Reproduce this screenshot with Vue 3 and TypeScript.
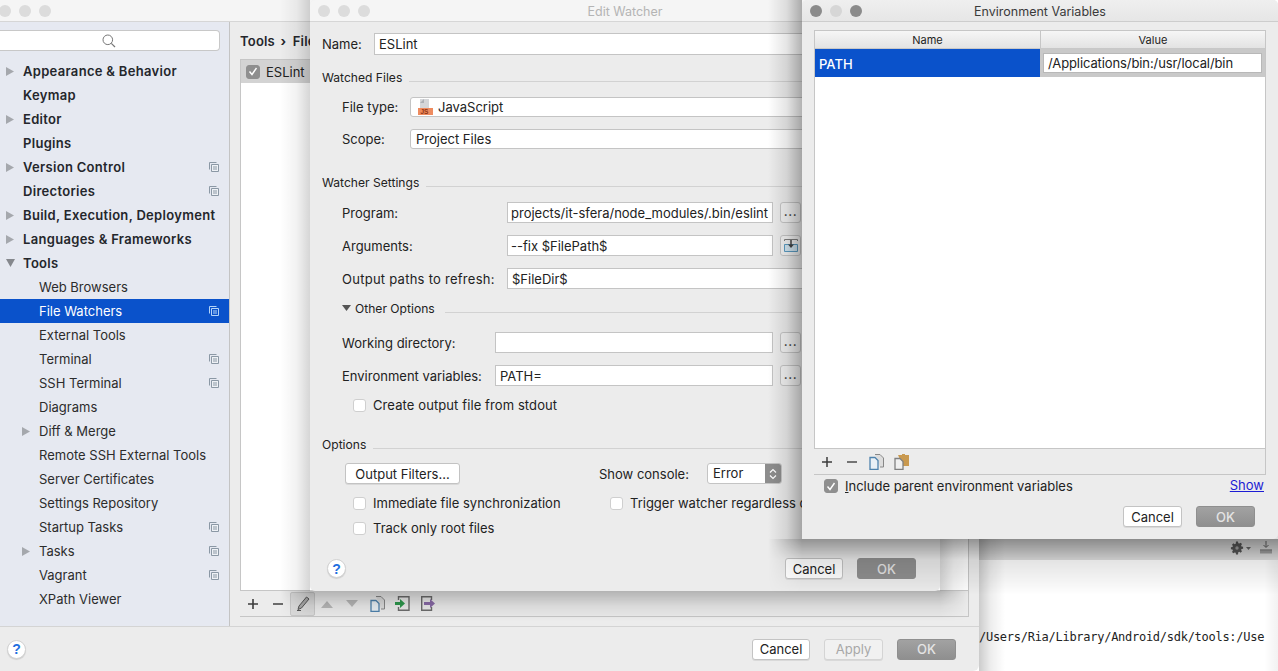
<script setup lang="ts">
interface NavItem { label: string; level: number; arrow?: 'right' | 'down'; stack?: boolean; selected?: boolean }
const nav: NavItem[] = [
  { label: 'Appearance & Behavior', level: 0, arrow: 'right' },
  { label: 'Keymap', level: 0 },
  { label: 'Editor', level: 0, arrow: 'right' },
  { label: 'Plugins', level: 0 },
  { label: 'Version Control', level: 0, arrow: 'right', stack: true },
  { label: 'Directories', level: 0, stack: true },
  { label: 'Build, Execution, Deployment', level: 0, arrow: 'right' },
  { label: 'Languages & Frameworks', level: 0, arrow: 'right' },
  { label: 'Tools', level: 0, arrow: 'down' },
  { label: 'Web Browsers', level: 1 },
  { label: 'File Watchers', level: 1, stack: true, selected: true },
  { label: 'External Tools', level: 1 },
  { label: 'Terminal', level: 1, stack: true },
  { label: 'SSH Terminal', level: 1, stack: true },
  { label: 'Diagrams', level: 1 },
  { label: 'Diff & Merge', level: 1, arrow: 'right' },
  { label: 'Remote SSH External Tools', level: 1 },
  { label: 'Server Certificates', level: 1 },
  { label: 'Settings Repository', level: 1 },
  { label: 'Startup Tasks', level: 1, stack: true },
  { label: 'Tasks', level: 1, arrow: 'right', stack: true },
  { label: 'Vagrant', level: 1, stack: true },
  { label: 'XPath Viewer', level: 1 },
]
</script>

<template>
  <div class="desk">
    <!-- IDE behind everything -->
    <div class="ide-band">
      <svg class="gear" width="14" height="14" viewBox="0 0 14 14"><path d="M6 .6h2l.3 1.600 1 .4 1.300-.9 1.400 1.400-.9 1.300.4 1 1.600.3v2l-1.600.3-.4 1 .9 1.300-1.400 1.400-1.300-.9-1 .4L8 13.400H6l-.3-1.600-1-.4-1.300.9L2 10.900l.9-1.300-.4-1L.9 8.300v-2l1.600-.3.4-1L2 3.700l1.400-1.400 1.300.9 1-.4z" fill="#5a5a5a"/><circle cx="7" cy="7" r="1.700" fill="#a8a8a8"/></svg>
      <svg class="caret" width="5" height="3" viewBox="0 0 5 3"><path d="M0 0h5L2.500 3z" fill="#6d6d6d"/></svg>
      <svg class="pin" width="12" height="14" viewBox="0 0 12 14"><path d="M6 0v6M3.500 4L6 6.500 8.500 4" fill="none" stroke="#666"/><path d="M0 9.500h12v3H0z" fill="#a3a3a3"/><path d="M0 9h12" stroke="#666"/></svg>
    </div>
    <div class="ide-edge"></div>
    <div class="ide-console">/Users/Ria/Library/Android/sdk/tools:/Use</div>

    <!-- Settings window -->
    <div class="shade s-settings-r"></div>
    <section class="win settings">
      <header class="title inactive">
        <i class="light l-off"></i><i class="light l-off"></i><i class="light l-off"></i>
      </header>
      <div class="settings-main">
        <aside class="side">
          <div class="search">
            <svg width="14" height="14" viewBox="0 0 14 14"><circle cx="5.800" cy="5.800" r="4.800" fill="none" stroke="#777"/><path d="M9.300 9.300L13 13" stroke="#777" stroke-width="1.200"/></svg>
          </div>
          <ul class="tree">
            <li v-for="n in nav" :key="n.label" class="node" :class="{ sel: n.selected, top: n.level === 0, sub: n.level === 1 }">
              <svg v-if="n.arrow === 'right'" class="arr" width="8" height="9" viewBox="0 0 8 9"><path d="M0 0l8 4.500L0 9z" fill="#a5a8ad"/></svg>
              <svg v-if="n.arrow === 'down'" class="arr" width="9" height="8" viewBox="0 0 9 8"><path d="M0 0h9L4.500 8z" fill="#85888d"/></svg>
              <span class="lbl">{{ n.label }}</span>
              <svg v-if="n.stack" class="stk" width="10" height="10" viewBox="0 0 10 10"><path d="M.5 7.500V.5h7" fill="none" :stroke="n.selected ? '#b4d4f8' : '#8b98a5'"/><path d="M2.500 2.500h7v7h-7z" :fill="n.selected ? 'none' : '#eef1f5'" :stroke="n.selected ? '#b4d4f8' : '#8b98a5'"/><path d="M4 5h4M4 7h4" :stroke="n.selected ? '#b4d4f8' : '#8b98a5'"/></svg>
            </li>
          </ul>
        </aside>
        <div class="pane">
          <div class="crumb">Tools <b class="chev">›</b> File Watchers</div>
          <div class="tbl">
            <div class="tbl-body">
              <div class="eslint-row">
                <span class="check on small"><svg width="10" height="9" viewBox="0 0 10 9"><path d="M1.500 4.500L4 7.500 8.500 1" fill="none" stroke="#fff" stroke-width="1.400"/></svg></span>
                <span>ESLint</span>
              </div>
            </div>
            <div class="tbl-tools">
              <span class="tool"><svg width="12" height="12" viewBox="0 0 12 12"><path d="M6 1v10M1 6h10" stroke="#3c3c3c" stroke-width="1.600"/></svg></span>
              <span class="tool"><svg width="12" height="12" viewBox="0 0 12 12"><path d="M1 6h10" stroke="#4c4c4c" stroke-width="1.600"/></svg></span>
              <span class="tool act"><svg width="14" height="15" viewBox="0 0 14 15"><path d="M10.500 1L13 3 5.500 12 2 13.500 3 10z" fill="#a8a8a8" stroke="#555"/><path d="M1 14.500h4" stroke="#555"/></svg></span>
              <span class="tool nudge"><svg width="12" height="8" viewBox="0 0 12 8"><path d="M0 8L6 1l6 7z" fill="#b8b8b8"/></svg></span>
              <span class="tool nudge"><svg width="12" height="8" viewBox="0 0 12 8"><path d="M0 0l6 7 6-7z" fill="#b8b8b8"/></svg></span>
              <span class="tool"><svg width="15" height="16" viewBox="0 0 15 16"><path d="M6 .500h5l3.500 3.500v9H11" fill="#ddd" stroke="#888"/><path d="M1 4.500h5l3 3v8H1z" fill="#e9f0f6" stroke="#4e82ad" stroke-width="1.300"/></svg></span>
              <span class="tool"><svg width="15" height="15" viewBox="0 0 15 15"><path d="M3.500 4V.700h10.500v13.600H3.500V11" fill="none" stroke="#6d6d6d" stroke-width="1.400"/><path d="M0 6h5V3l5 4.500L5 12V9H0z" fill="#2e9a4e"/></svg></span>
              <span class="tool"><svg width="15" height="15" viewBox="0 0 15 15"><path d="M11.500 4V.700H1.700v13.600h9.800V11" fill="none" stroke="#6d6d6d" stroke-width="1.400"/><path d="M4 6h6V3l5 4.500L10 12V9H4z" fill="#8a6ba8"/></svg></span>
            </div>
          </div>
        </div>
      </div>
      <footer class="settings-foot">
        <span class="help"><i>?</i></span>
        <span class="spring"></span>
        <button class="btn plain w58">Cancel</button>
        <button class="btn plain w59 dis">Apply</button>
        <button class="btn ok w59">OK</button>
      </footer>
    </section>

    <!-- Edit Watcher -->
    <div class="shade s-watcher-l"></div>
    <div class="shade s-watcher-r"></div>
    <div class="shade s-watcher-b"></div>
    <section class="win watcher">
      <header class="title inactive">
        <i class="light l-off"></i><i class="light l-off"></i><i class="light l-off"></i>
        <span class="cap dim">Edit Watcher</span>
      </header>
      <div class="w-body">
        <div class="row name-row"><label class="name-l">Name:</label><div class="field grow">ESLint</div></div>
        <div class="group g-watched"><span>Watched Files</span><hr /></div>
        <div class="row ft"><label class="l68">File type:</label>
          <div class="field grow round js">
            <svg width="15" height="16" viewBox="0 0 15 16"><path d="M2 0h9v9H2z" fill="#d5d7da"/><path d="M2 4l4-4v4z" fill="#aeb2b7"/><path d="M0 9h15v7H0z" fill="#ee8b5f"/><text x="2.500" y="15" font-size="6.500" font-weight="700" font-family="Liberation Sans" fill="#8f3512">JS</text></svg>
            <span>JavaScript</span>
          </div>
        </div>
        <div class="row sc"><label class="l68">Scope:</label><div class="field grow round">Project Files</div></div>
        <div class="group g-settings"><span>Watcher Settings</span><hr /></div>
        <div class="row pr"><label class="l165">Program:</label><div class="field f265">projects/it-sfera/node_modules/.bin/eslint</div><button class="dots">...</button></div>
        <div class="row pr"><label class="l165">Arguments:</label><div class="field f265">--fix $FilePath$</div>
          <button class="dots ins"><svg width="16" height="15" viewBox="0 0 16 15"><path d="M1.500 6.500h13v7h-13z" fill="#d3e7f2" stroke="#5b9cc2"/><path d="M1.500 3V1.500h13V3" fill="none" stroke="#808080"/><path d="M8 2v5" stroke="#444" stroke-width="1.500"/><path d="M5 6.500h6L8 10z" fill="#444"/></svg></button></div>
        <div class="row pr"><label class="l165 spaced">Output paths to refresh:</label><div class="field grow">$FileDir$</div></div>
        <div class="other"><svg width="9" height="6" viewBox="0 0 9 6"><path d="M0 0h9L4.500 6z" fill="#555"/></svg><span>Other Options</span><hr /></div>
        <div class="row wd"><label class="l153">Working directory:</label><div class="field f277"></div><button class="dots">...</button></div>
        <div class="row ev"><label class="l153">Environment variables:</label><div class="field f277">PATH=</div><button class="dots">...</button></div>
        <div class="row chk stdout"><span class="check"></span><span class="wide">Create output file from stdout</span></div>
        <div class="group g-options"><span>Options</span><hr /></div>
        <div class="row filt">
          <button class="btn plain filters">Output Filters...</button>
          <span class="console-l">Show console:</span>
          <div class="stepper"><span>Error</span><b><svg width="8" height="12" viewBox="0 0 8 12"><path d="M1 4.500L4 1.500l3 3M1 7.500l3 3 3-3" fill="none" stroke="#fff" stroke-width="1.200"/></svg></b></div>
        </div>
        <div class="row chk imm"><span class="check"></span><span class="imm-t">Immediate file synchronization</span><span class="check"></span><span>Trigger watcher regardless of syntax errors</span></div>
        <div class="row chk trk"><span class="check"></span><span>Track only root files</span></div>
        <div class="row foot">
          <span class="help"><i>?</i></span>
          <span class="spring"></span>
          <button class="btn plain w58">Cancel</button>
          <button class="btn ok w59 grey">OK</button>
        </div>
      </div>
    </section>

    <!-- Environment Variables -->
    <div class="shade s-env-l"></div>
    <div class="shade s-env-b"></div>
    <section class="win env">
      <header class="title">
        <i class="light l-dark"></i><i class="light l-faint"></i><i class="light l-dark"></i>
        <span class="cap">Environment Variables</span>
      </header>
      <div class="e-body">
        <div class="etable">
          <div class="ehead"><span class="c1">Name</span><span class="c2">Value</span></div>
          <div class="erow">
            <span class="c1 esel">PATH</span>
            <span class="c2 eedit"><span class="einput">/Applications/bin:/usr/local/bin</span></span>
          </div>
          <div class="espace"></div>
          <div class="etools">
            <span class="etool"><svg width="12" height="12" viewBox="0 0 12 12"><path d="M6 1v10M1 6h10" stroke="#3c3c3c" stroke-width="1.500"/></svg></span>
            <span class="etool"><svg width="12" height="12" viewBox="0 0 12 12"><path d="M1 6h10" stroke="#4c4c4c" stroke-width="1.500"/></svg></span>
            <span class="etool"><svg width="15" height="16" viewBox="0 0 15 16"><path d="M6 .500h5l3.500 3.500v9H11" fill="#ddd" stroke="#888"/><path d="M1 3.500h5l3 3v9H1z" fill="#e9f0f6" stroke="#4e82ad" stroke-width="1.300"/></svg></span>
            <span class="etool"><svg width="15" height="16" viewBox="0 0 15 16"><path d="M4 1h4V0h3v1h4v11H9z" fill="#c9994f"/><path d="M1 4.500h5l3 3v8H1z" fill="#f0f0f0" stroke="#808080" stroke-width="1.300"/></svg></span>
          </div>
        </div>
        <div class="incl">
          <span class="check on"><svg width="10" height="9" viewBox="0 0 10 9"><path d="M1.500 4.500L4 7.500 8.500 1" fill="none" stroke="#fff" stroke-width="1.400"/></svg></span>
          <span class="incl-t"><u>I</u>nclude parent environment variables</span>
          <a class="show">Show</a>
        </div>
        <div class="e-btns">
          <button class="btn plain w59">Cancel</button>
          <button class="btn ok w59">OK</button>
        </div>
      </div>
    </section>
  </div>
</template>

<style>
html, body { margin: 0; background: #fff; overflow: hidden; }
</style>

<style scoped>
.desk { position: relative; width: 1278px; height: 671px; overflow: hidden; background: #fff; font-family: Inter, "Liberation Sans", sans-serif; font-size: 13px; color: #222; }
.ide-band { position: absolute; left: 900px; top: 530px; width: 378px; height: 30px; background: #e0e0e0; }
.gear { position: absolute; left: 330px; top: 11px; }
.caret { position: absolute; left: 346px; top: 17px; }
.pin { position: absolute; left: 360px; top: 11px; }
.ide-edge { position: absolute; right: 0; top: 560px; width: 14px; height: 111px; background: linear-gradient(90deg, rgba(0, 0, 0, 0), rgba(0, 0, 0, .05)); }
.ide-console { position: absolute; left: 979px; top: 629px; font: 12px/16px "DejaVu Sans Mono", monospace; letter-spacing: -.27px; color: #222; white-space: nowrap; }

.shade { position: absolute; pointer-events: none; }
.s-settings-r { left: 979px; top: 0; width: 26px; height: 671px; background: linear-gradient(90deg, rgba(0, 0, 0, .2), rgba(0, 0, 0, .07) 45%, rgba(0, 0, 0, 0)); }
.s-watcher-l { left: 280px; top: 0; width: 30px; height: 591px; background: linear-gradient(90deg, rgba(0, 0, 0, 0), rgba(0, 0, 0, .05) 55%, rgba(0, 0, 0, .16)); }
.s-watcher-r { left: 940px; top: 0; width: 30px; height: 591px; background: linear-gradient(90deg, rgba(0, 0, 0, .16), rgba(0, 0, 0, .05) 45%, rgba(0, 0, 0, 0)); }
.s-watcher-b { left: 280px; top: 591px; width: 690px; height: 30px; background: linear-gradient(rgba(0, 0, 0, .24), rgba(0, 0, 0, .08) 50%, rgba(0, 0, 0, 0)); -webkit-mask-image: linear-gradient(90deg, transparent, #000 30px, #000 660px, transparent); mask-image: linear-gradient(90deg, transparent, #000 30px, #000 660px, transparent); }
.s-env-l { left: 768px; top: 0; width: 34px; height: 539px; background: linear-gradient(90deg, rgba(0, 0, 0, 0), rgba(0, 0, 0, .1) 55%, rgba(0, 0, 0, .3)); }
.s-env-b { left: 768px; top: 539px; width: 510px; height: 56px; background: linear-gradient(rgba(0, 0, 0, .38), rgba(0, 0, 0, .11) 37%, rgba(0, 0, 0, 0)); -webkit-mask-image: linear-gradient(90deg, transparent, #000 34px); mask-image: linear-gradient(90deg, transparent, #000 34px); }

.win { position: absolute; background: #ececec; display: flex; flex-direction: column; overflow: hidden; }
.settings { left: 0; top: 0; width: 979px; height: 671px; border-radius: 0 0 6px 0; }
.watcher { left: 310px; top: 0; width: 630px; height: 591px; border-radius: 5px; }
.env { left: 802px; top: 0; width: 476px; height: 539px; border-radius: 5px; }

.title { height: 22px; box-sizing: border-box; flex: none; display: flex; align-items: center; padding-left: 8px; gap: 8px; background: linear-gradient(#efefef, #e6e6e6); border-bottom: 1px solid #cdcdcd; position: relative; }
.title.inactive { background: #f5f5f5; border-bottom-color: #d6d6d6; }
.settings .title { padding-left: 0; }
.settings .title .light:first-child { margin-left: -1px; }
.light { width: 12px; height: 12px; border-radius: 50%; display: block; }
.l-off { background: #dcdcdc; }
.l-dark { background: #8b8b8b; }
.l-faint { background: #d6d6d6; }
.cap { position: absolute; left: 0; right: 0; top: 4px; text-align: center; font-size: 12.500px; line-height: 16px; color: #3a3a3a; }
.cap.dim { color: #b4b4b4; }

.settings-main { flex: 1; display: flex; min-height: 0; }
.side { width: 230px; flex: none; background: #e6e9f1; border-right: 1px solid #c4c4c4; box-sizing: border-box; }
.search { margin: 8px 0 0; width: 220px; height: 21px; background: #fff; border: 1px solid #c8c8c8; border-left: 0; border-radius: 0 4px 4px 0; box-sizing: border-box; display: flex; align-items: center; justify-content: center; padding-right: 1px; }
.tree { list-style: none; margin: 8px 0 0; padding: 0; }
.node { height: 24px; display: flex; align-items: center; position: relative; line-height: 24px; white-space: nowrap; }
.top { padding-left: 23px; font-weight: 600; color: #24262b; letter-spacing: .31px; }
.sub { padding-left: 39px; color: #2c2c2c; }
.sel { background: #0a52cb; color: #fff; }
.arr { position: absolute; left: 6px; top: 8px; }
.sub .arr { left: 22px; }
.stk { position: absolute; left: 209px; top: 7px; }

.pane { flex: 1; padding: 0 10px; min-width: 0; display: flex; flex-direction: column; }
.crumb { font-weight: 600; height: 37px; flex: none; line-height: 38px; white-space: nowrap; color: #24262b; letter-spacing: .2px; }
.chev { font-weight: 700; margin: 0 3px 0 2px; }
.tbl { height: 558px; border: 1px solid #c6c6c6; box-sizing: border-box; background: #fff; display: flex; flex-direction: column; }
.tbl-body { flex: 1; }
.eslint-row { height: 23px; background: #d3d3d3; display: flex; align-items: center; gap: 6px; padding-left: 5px; }
.tbl-tools { height: 26px; box-sizing: border-box; flex: none; border-top: 1px solid #c6c6c6; background: #ececec; display: flex; align-items: center; margin-left: -1px; }
.tool { width: 25px; height: 24px; display: flex; align-items: center; justify-content: center; box-sizing: border-box; }
.tool.act { background: #dbdbdb; border: 1px solid #c8c8c8; border-radius: 2px; }
.tool.nudge svg { margin-right: 1px; }
.settings-foot { height: 44px; flex: none; border-top: 1px solid #d4d4d4; display: flex; align-items: center; padding: 0 23px 0 7px; gap: 14px; }
.spring { flex: 1; }
.help { width: 19px; height: 19px; border-radius: 50%; background: #fff; border: 1px solid #d2d2d2; display: flex; align-items: center; justify-content: center; box-sizing: border-box; box-shadow: 0 1px 1px rgba(0,0,0,.12); }
.help i { font: 700 14px/1 "Liberation Sans", sans-serif; color: #1f6fe0; }

.btn { font: inherit; height: 21px; padding: 0; box-sizing: border-box; border-radius: 3px; color: #222; }
.plain { background: #fff; border: 1px solid #c3c3c3; box-shadow: 0 1px 0 rgba(0,0,0,.08); }
.dis { color: #a8a8a8; background: #f1f1f1; border-color: #d4d4d4; }
.ok { background: linear-gradient(#a2a2a2, #8f8f8f); border: 1px solid #8f8f8f; color: #e4e4e4; font-weight: 500; }
.w58 { width: 58px; }
.w59 { width: 59px; }

.w-body { flex: 1; padding: 11px 24px 0 12px; display: flex; flex-direction: column; min-height: 0; white-space: nowrap; }
.row { display: flex; align-items: center; flex: none; }
.field { background: #fff; border: 1px solid #c4c4c4; box-sizing: border-box; height: 21px; line-height: 20px; padding: 0 4px; min-width: 0; overflow: hidden; white-space: nowrap; }
.grow { flex: 1; }
.round { border-radius: 3px; }
.name-row { height: 22px; }
.name-l { width: 52px; }
.name-row .field { height: 22px; padding-left: 4px; }
.group { display: flex; align-items: center; gap: 7px; height: 16px; font-size: 12.100px; }
.group hr { flex: 1; margin: 8px 0 0; border: 0; border-top: 1px solid #d2d2d2; }
.g-watched { margin-top: 14px; }
.ft { margin-top: 12px; height: 20px; }
.sc { margin-top: 12px; height: 20px; }
.js { display: flex; align-items: center; gap: 5px; padding-left: 7px; height: 20px; }
.sc .field { height: 20px; line-height: 18px; padding-left: 5px; }
.l68 { width: 68px; padding-left: 20px; flex: none; }
.g-settings { margin-top: 25px; }
.pr { margin-top: 12px; height: 21px; }
.l165 { width: 165px; padding-left: 20px; flex: none; }
.spaced { letter-spacing: .26px; }
.f265 { width: 266px; flex: none; padding: 0 3px; }
.dots { width: 21px; height: 21px; margin-left: 7px; flex: none; padding: 0 0 2px; background: #f2f2f2; border: 1px solid #c6c6c6; border-radius: 3px; font: 500 13px/1 Inter, sans-serif; letter-spacing: .5px; color: #333; display: flex; align-items: center; justify-content: center; box-sizing: border-box; }
.ins { padding: 0; }
.other { display: flex; align-items: center; height: 16px; margin: 11px 0 0 20px; font-size: 12.100px; }
.other span { margin-left: 4px; }
.other hr { flex: 1; margin: 8px 0 0 10px; border: 0; border-top: 1px solid #d2d2d2; }
.wd { margin-top: 16px; height: 21px; }
.ev { margin-top: 12px; height: 21px; }
.l153 { width: 153px; padding-left: 20px; flex: none; }
.f277 { width: 278px; flex: none; }
.chk { gap: 7px; }
.wide { letter-spacing: .1px; }
.stdout { margin: 11px 0 0 31px; height: 16px; }
.check { width: 13px; height: 13px; background: #fff; border: 1px solid #cfcfcf; border-radius: 3px; box-sizing: border-box; flex: none; display: inline-flex; align-items: center; justify-content: center; }
.check.on { background: #8f8f8f; border-color: #8f8f8f; width: 14px; height: 14px; }
.g-options { margin-top: 23px; }
.filt { margin: 11px 0 0 23px; height: 21px; }
.filters { width: 115px; }
.console-l { margin-left: 139px; width: 108px; }
.stepper { width: 75px; height: 21px; border: 1px solid #c4c4c4; border-radius: 3px; background: #fff; box-sizing: border-box; display: flex; justify-content: space-between; overflow: hidden; line-height: 19px; padding-left: 5px; }
.stepper b { width: 16px; background: #8d8d8d; display: flex; align-items: center; justify-content: center; }
.imm { margin: 11px 0 0 31px; height: 16px; }
.imm-t { width: 230px; }
.trk { margin: 9px 0 0 31px; height: 16px; }
.foot { margin-top: 22px; margin-left: 5px; height: 21px; }
.foot .btn.ok { margin-left: 14px; }
.grey { background: #8f8f8f; }

.e-body { flex: 1; padding: 8px 12px 0; display: flex; flex-direction: column; min-height: 0; white-space: nowrap; }
.etable { height: 445px; border: 1px solid #c6c6c6; box-sizing: border-box; display: flex; flex-direction: column; background: #fff; }
.ehead { height: 18px; box-sizing: border-box; flex: none; display: flex; font-size: 11px; line-height: 19px; background: linear-gradient(#f6f6f6, #e3e3e3); border-bottom: 1px solid #c8c8c8; text-align: center; color: #222; }
.c1 { width: 225px; flex: none; }
.c2 { flex: 1; border-left: 1px solid #c6c6c6; }
.erow { height: 28px; flex: none; display: flex; }
.esel { background: #0a52cb; color: #fff; padding: 1px 0 0 4px; box-sizing: border-box; line-height: 28px; font-weight: 500; }
.eedit { background: #c9c9c9; border-left: 0; padding: 4px 3px; display: flex; }
.einput { flex: 1; background: #fff; border: 1px solid #b8b8b8; padding: 0 4px; line-height: 18px; box-sizing: border-box; letter-spacing: -.1px; }
.espace { flex: 1; }
.etools { height: 26px; box-sizing: border-box; flex: none; border-top: 1px solid #c6c6c6; background: #ececec; display: flex; align-items: center; margin-left: -1px; }
.etool { width: 25px; display: flex; align-items: center; justify-content: center; }
.incl { height: 16px; margin: 3px 2px 0 10px; display: flex; align-items: center; gap: 7px; }
.incl-t { flex: 1; }
.show { color: #1c1cd4; text-decoration: underline; margin-bottom: 2px; }
.e-btns { display: flex; justify-content: flex-end; gap: 14px; padding-right: 11px; margin-top: 12px; }
</style>
